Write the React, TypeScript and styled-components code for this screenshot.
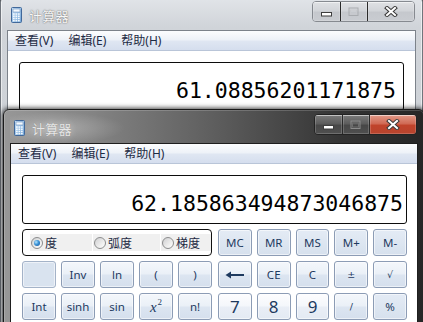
import React from 'react';
import styled, { createGlobalStyle, css } from 'styled-components';

const GlobalStyle = createGlobalStyle`
  html, body { margin: 0; padding: 0; }
  body {
    background: #2b2b2b;
    font-family: "Noto Sans", "Noto Sans CJK SC", sans-serif;
  }
`;

const Desktop = styled.div`
  position: relative;
  width: 423px;
  height: 322px;
  overflow: hidden;
  background: #2b2b2b;
`;

interface WinProps {
  $active?: boolean;
  $left: number;
  $top: number;
  $width: number;
  $height: number;
}

const Window = styled.div<WinProps>`
  position: absolute;
  left: ${p => p.$left}px;
  top: ${p => p.$top}px;
  width: ${p => p.$width}px;
  height: ${p => p.$height}px;
  box-sizing: border-box;
  padding: 0 6px 6px;
  display: flex;
  flex-direction: column;
  border-radius: 6px 6px 0 0;
  border: 1px solid ${p => (p.$active ? '#1a1a1a' : '#70757c')};
  background: ${p =>
    p.$active
      ? 'linear-gradient(to right, #979797 0%, #858585 20%, #5e5e5e 50%, #343434 80%, #262626 100%)'
      : 'linear-gradient(to bottom, #e2e5e9 0%, #d0d4d9 30px, #c9cdd3 100%)'};
  box-shadow: inset 0 0 0 1px ${p => (p.$active ? 'rgba(255,255,255,0.18)' : 'rgba(255,255,255,0.55)')}
    ${p => (p.$active ? ', 0 0 5px 1px rgba(0,0,0,0.75)' : '')};
`;

const TitleBar = styled.div<{ $active?: boolean }>`
  height: 33px;
  flex: none;
  display: flex;
  align-items: flex-start;
  padding-left: 4px;
  ${p =>
    p.$active &&
    css`
      background: radial-gradient(ellipse 70px 16px at 45px 18px, rgba(255, 255, 255, 0.28), rgba(255, 255, 255, 0) 100%);
    `}
`;

const AppIcon = styled.svg`
  margin-top: 10px;
  flex: none;
`;

const TitleText = styled.span<{ $active?: boolean }>`
  margin-left: 7px;
  padding-top: 10px;
  line-height: 17px;
  font-size: 13px;
  font-family: "Noto Sans CJK SC", sans-serif;
  letter-spacing: 0.3px;
  color: ${p => (p.$active ? '#e6e6e6' : '#f6f6f6')};
  text-shadow: ${p =>
    p.$active
      ? '0 0 6px rgba(255,255,255,0.5), 0 0 1px #6a6a6a'
      : '0 0 1px #6d6d6d, 0 0 2px #8a8a8a'};
`;

const CaptionGroup = styled.div<{ $active?: boolean }>`
  display: flex;
  height: 19px;
  margin: 4px 1px 0 auto;
  border: 1px solid ${p => (p.$active ? '#232323' : '#868a90')};
  border-radius: 4px;
  overflow: hidden;
`;

const CaptionButton = styled.div<{ $w: number; $close?: boolean; $active?: boolean }>`
  width: ${p => p.$w}px;
  display: flex;
  align-items: center;
  justify-content: center;
  box-sizing: border-box;
  & + & {
    border-left: 1px solid ${p => (p.$active ? '#2a2a2a' : '#8d9196')};
  }
  box-shadow: inset 0 1px 0 rgba(255, 255, 255, 0.45), inset 0 0 0 1px rgba(255, 255, 255, 0.18);
  background: ${p => {
    if (p.$active && p.$close)
      return 'linear-gradient(to bottom, #e29a89 0%, #d06a55 45%, #c0432b 55%, #b8442e 100%)';
    if (p.$active) return 'linear-gradient(to bottom, #7b7b7b 0%, #5d5d5d 45%, #474747 55%, #505050 100%)';
    return 'linear-gradient(to bottom, #dfe1e4 0%, #d2d5d9 45%, #c5c8cd 55%, #c9ccd1 100%)';
  }};
`;

const Client = styled.div<{ $active?: boolean }>`
  flex: 1;
  display: flex;
  flex-direction: column;
  background: #ffffff;
  border: 1px solid ${p => (p.$active ? '#1e1e1e' : '#7c828a')};
  border-bottom: none;
`;

const MenuBar = styled.div`
  height: 20px;
  flex: none;
  display: flex;
  align-items: center;
  padding-left: 7px;
  box-sizing: border-box;
  background: linear-gradient(to bottom, #fcfdfe 0%, #eef2f8 45%, #dfe6f2 55%, #d5deee 100%);
  border-bottom: 1px solid #b9c5d8;
`;

const MenuItem = styled.span`
  font-size: 12px;
  color: #1e2b44;
  margin-right: 15px;
  line-height: 18px;
`;

const Body = styled.div<{ $padRight: number }>`
  padding: 11px ${p => p.$padRight}px 0 11px;
`;

const Display = styled.div<{ $pad: number }>`
  height: 49px;
  box-sizing: border-box;
  border: 1px solid #0c0c0c;
  border-radius: 3px;
  background: #fff;
  display: flex;
  justify-content: flex-end;
  align-items: center;
  padding: 7px ${p => p.$pad}px 0 0;
  font-family: "DejaVu Sans Mono", monospace;
  font-size: 21.5px;
  color: #000;
`;

const Keypad = styled.div`
  display: flex;
  gap: 6px;
  margin-top: 5px;
`;

const LeftKeys = styled.div`
  display: grid;
  grid-template-columns: repeat(5, 34px);
  grid-auto-rows: 27px;
  gap: 5px;
`;

const RightKeys = styled.div`
  flex: 1;
  display: grid;
  grid-template-columns: repeat(5, 1fr);
  grid-auto-rows: 27px;
  gap: 5px;
`;

const RadioGroup = styled.div`
  grid-column: 1 / -1;
  border: 1px solid #111;
  border-radius: 4px;
  box-sizing: border-box;
  padding: 4px 0 4px 7px;
  display: flex;
`;

const RadioStrip = styled.div`
  flex: 1;
  display: flex;
  background: #f0f0f0;
`;

const RadioOption = styled.label<{ $w?: number }>`
  ${p => (p.$w ? `width: ${p.$w}px;` : 'flex: 1;')}
  display: flex;
  align-items: center;
  box-sizing: border-box;
  padding-left: 1px;
  border-right: 1px solid #ffffff;
  font-size: 12px;
  color: #1e2b44;
  font-family: "Noto Sans CJK SC", sans-serif;
  &:last-child {
    border-right: none;
  }
`;

const RadioDot = styled.span<{ $on?: boolean }>`
  width: 12px;
  height: 12px;
  box-sizing: border-box;
  border-radius: 50%;
  border: 1px solid #8b8c8d;
  margin-right: 2px;
  display: flex;
  align-items: center;
  justify-content: center;
  background: linear-gradient(135deg, #cfd0d1 0%, #f2f2f2 70%, #fdfdfd 100%);
  &::after {
    content: '';
    width: 6px;
    height: 6px;
    border-radius: 50%;
    display: ${p => (p.$on ? 'block' : 'none')};
    background: radial-gradient(circle at 35% 35%, #b5e6ff 0%, #3a92d6 45%, #124f95 100%);
  }
`;

type KeyKind = 'blank' | 'fn' | 'mem' | 'num';

const Key = styled.div<{ $kind: KeyKind; $big?: boolean; $small?: boolean }>`
  box-sizing: border-box;
  border: 1px solid ${p => (p.$kind === 'blank' ? '#a4b3c8' : '#8c9cb5')};
  border-radius: 3px;
  display: flex;
  align-items: center;
  justify-content: center;
  font-family: ${p => (p.$small ? '"DejaVu Sans", sans-serif' : '"Noto Sans", sans-serif')};
  font-size: ${p => (p.$big ? '17px' : p.$small ? '9.5px' : '11.5px')};
  color: #1e3a5f;
  box-shadow: inset 0 0 0 1px rgba(255, 255, 255, 0.55);
  background: ${p => {
    switch (p.$kind) {
      case 'blank':
        return '#d9e3ef';
      case 'mem':
        return 'linear-gradient(to bottom, #e4ebf5 0%, #dde6f1 50%, #d6e0ed 100%)';
      case 'num':
        return 'linear-gradient(to bottom, #fdfdfe 0%, #f4f7fb 48%, #e9eef6 52%, #e3eaf3 100%)';
      default:
        return 'linear-gradient(to bottom, #f4f7fb 0%, #eaf0f7 48%, #dce5f1 52%, #d5dfed 100%)';
    }
  }};
`;

const Sq = styled.span`
  font-family: "Liberation Serif", serif;
  font-size: 15px;
  font-style: italic;
  sup {
    font-style: normal;
    font-size: 9px;
    vertical-align: 7px;
    margin-left: 1px;
  }
`;

const CalcIcon = () => (
  <AppIcon width="11" height="16" viewBox="0 0 11 16">
    <defs>
      <linearGradient id="ib" x1="0" y1="0" x2="1" y2="1">
        <stop offset="0" stopColor="#cfe6fb" />
        <stop offset="1" stopColor="#6fa3d6" />
      </linearGradient>
    </defs>
    <rect x="0.5" y="0.5" width="10" height="15" rx="1" fill="url(#ib)" stroke="#41689a" />
    <rect x="2" y="2" width="7" height="3" fill="#f4faff" stroke="#7092bb" strokeWidth="0.6" />
    {[0, 1, 2].map(c =>
      [0, 1, 2, 3].map(r => (
        <rect key={`${c}-${r}`} x={2 + c * 2.5} y={6.3 + r * 2.2} width="1.7" height="1.5" fill="#f5f9fd" />
      ))
    )}
  </AppIcon>
);

const MinGlyph = () => (
  <svg width="12" height="12" viewBox="0 0 12 12">
    <rect x="0.5" y="6.5" width="10" height="3.5" fill="#fff" stroke="#3d3d3d" />
  </svg>
);

const MaxGlyph = ({ active }: { active?: boolean }) => (
  <svg width="12" height="10" viewBox="0 0 12 10">
    <rect x="1" y="1" width="9" height="7.5" fill="none" stroke={active ? '#8c8c8c' : '#a9acb0'} strokeWidth="1" />
    <rect x="2.5" y="3" width="6" height="4" fill="none" stroke={active ? '#6e6e6e' : '#c8cace'} strokeWidth="1" />
  </svg>
);

const CloseGlyph = () => (
  <svg width="14" height="11" viewBox="0 0 14 11">
    <path d="M3 2 L11 9 M11 2 L3 9" stroke="#3a3a3a" strokeWidth="4" strokeLinecap="square" />
    <path d="M3 2 L11 9 M11 2 L3 9" stroke="#ffffff" strokeWidth="2" strokeLinecap="square" />
  </svg>
);

const BackArrow = () => (
  <svg width="20" height="8" viewBox="0 0 20 8">
    <path d="M5 4 H19" stroke="#1e3a5f" strokeWidth="2" />
    <path d="M0.5 4 L6 0.5 L6 7.5 Z" fill="#1e3a5f" />
  </svg>
);

interface CalcWindowProps {
  active?: boolean;
  left: number;
  top: number;
  width: number;
  height: number;
  value: string;
  displayPad: number;
  bodyPadRight: number;
  showKeys?: boolean;
}

const CalcWindow: React.FC<CalcWindowProps> = ({ active, left, top, width, height, value, displayPad, bodyPadRight, showKeys }) => (
  <Window $active={active} $left={left} $top={top} $width={width} $height={height}>
    <TitleBar $active={active}>
      <CalcIcon />
      <TitleText $active={active}>计算器</TitleText>
      <CaptionGroup $active={active}>
        <CaptionButton $w={27} $active={active}>
          <MinGlyph />
        </CaptionButton>
        <CaptionButton $w={27} $active={active}>
          <MaxGlyph active={active} />
        </CaptionButton>
        <CaptionButton $w={47} $close $active={active}>
          <CloseGlyph />
        </CaptionButton>
      </CaptionGroup>
    </TitleBar>
    <Client $active={active}>
      <MenuBar>
        <MenuItem>查看(V)</MenuItem>
        <MenuItem>编辑(E)</MenuItem>
        <MenuItem>帮助(H)</MenuItem>
      </MenuBar>
      <Body $padRight={bodyPadRight}>
        <Display $pad={displayPad}>{value}</Display>
        {showKeys && (
          <Keypad>
            <LeftKeys>
              <RadioGroup>
                <RadioStrip>
                  <RadioOption $w={63}>
                    <RadioDot $on />度
                  </RadioOption>
                  <RadioOption $w={68}>
                    <RadioDot />弧度
                  </RadioOption>
                  <RadioOption>
                    <RadioDot />梯度
                  </RadioOption>
                </RadioStrip>
              </RadioGroup>
              <Key $kind="blank" />
              <Key $kind="fn">Inv</Key>
              <Key $kind="fn">ln</Key>
              <Key $kind="fn">(</Key>
              <Key $kind="fn">)</Key>
              <Key $kind="fn">Int</Key>
              <Key $kind="fn">sinh</Key>
              <Key $kind="fn">sin</Key>
              <Key $kind="fn">
                <Sq>
                  x<sup>2</sup>
                </Sq>
              </Key>
              <Key $kind="fn">n!</Key>
            </LeftKeys>
            <RightKeys>
              <Key $kind="mem">MC</Key>
              <Key $kind="mem">MR</Key>
              <Key $kind="mem">MS</Key>
              <Key $kind="mem">M+</Key>
              <Key $kind="mem">M-</Key>
              <Key $kind="fn">
                <BackArrow />
              </Key>
              <Key $kind="fn">CE</Key>
              <Key $kind="fn">C</Key>
              <Key $kind="fn" $small>±</Key>
              <Key $kind="fn" $small>√</Key>
              <Key $kind="num" $big>7</Key>
              <Key $kind="num" $big>8</Key>
              <Key $kind="num" $big>9</Key>
              <Key $kind="fn" $small>/</Key>
              <Key $kind="mem">%</Key>
            </RightKeys>
          </Keypad>
        )}
      </Body>
    </Client>
  </Window>
);

export default function App() {
  return (
    <>
      <GlobalStyle />
      <Desktop>
        <CalcWindow left={0} top={-4} width={423} height={340} value="61.08856201171875" displayPad={7} bodyPadRight={11} />
        <CalcWindow active left={3} top={109} width={422} height={230} value="62.185863494873046875" displayPad={3} bodyPadRight={10} showKeys />
      </Desktop>
    </>
  );
}
